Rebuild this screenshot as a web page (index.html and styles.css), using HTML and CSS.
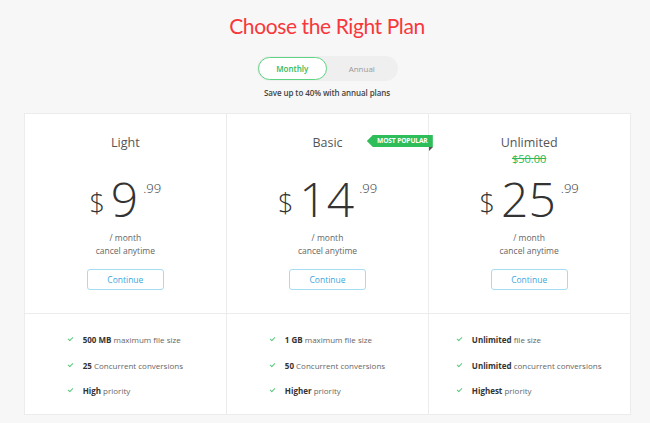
FILE: index.html
```html
<!DOCTYPE html>
<html>
<head>
<meta charset="utf-8">
<link rel="stylesheet" href="styles.css">
</head>
<body>
<div class="page">
  <h1 class="title">Choose the Right Plan</h1>
  <div class="toggle">
    <span class="opt active">Monthly</span>
    <span class="opt">Annual</span>
  </div>
  <p class="save">Save up to 40% with annual plans</p>
  <div class="plans">
    <div class="plan">
      <div class="top">
        <div class="name">Light</div>
        <div class="price"><span class="cur">$</span><span class="num">9</span><span class="cents">.99</span></div>
        <div class="per">/ month<br>cancel anytime</div>
        <a class="btn">Continue</a>
      </div>
      <div class="feats">
        <ul>
          <li><span class="chk"></span><b>500 MB</b> maximum file size</li>
          <li><span class="chk"></span><b>25</b> Concurrent conversions</li>
          <li><span class="chk"></span><b>High</b> priority</li>
        </ul>
      </div>
    </div>
    <div class="plan popular">
      <div class="top">
        <div class="badge">MOST POPULAR</div>
        <div class="name">Basic</div>
        <div class="price"><span class="cur">$</span><span class="num">14</span><span class="cents">.99</span></div>
        <div class="per">/ month<br>cancel anytime</div>
        <a class="btn">Continue</a>
      </div>
      <div class="feats">
        <ul>
          <li><span class="chk"></span><b>1 GB</b> maximum file size</li>
          <li><span class="chk"></span><b>50</b> Concurrent conversions</li>
          <li><span class="chk"></span><b>Higher</b> priority</li>
        </ul>
      </div>
    </div>
    <div class="plan">
      <div class="top">
        <div class="name">Unlimited</div>
        <div class="old">$50.00</div>
        <div class="price withold"><span class="cur">$</span><span class="num">25</span><span class="cents">.99</span></div>
        <div class="per">/ month<br>cancel anytime</div>
        <a class="btn">Continue</a>
      </div>
      <div class="feats">
        <ul>
          <li><span class="chk"></span><b>Unlimited</b> file size</li>
          <li><span class="chk"></span><b>Unlimited</b> concurrent conversions</li>
          <li><span class="chk"></span><b>Highest</b> priority</li>
        </ul>
      </div>
    </div>
  </div>
</div>
</body>
</html>
```
FILE: styles.css
```css
* { box-sizing: border-box; }
html, body { margin: 0; padding: 0; }
body {
  background: #f7f7f7;
  font-family: "Open Sans", "Liberation Sans", sans-serif;
  color: #555;
  height: 423px;
  overflow: hidden;
}
.page {
  display: flex;
  flex-direction: column;
  align-items: center;
  padding-top: 10px;
  padding-left: 4px;
}
.title {
  margin: 0;
  font-family: Lato, "Open Sans", sans-serif;
  font-size: 21px;
  line-height: 32px;
  font-weight: 400;
  letter-spacing: -0.4px;
  color: #f8373c;
}
.toggle {
  margin-top: 14px;
  width: 141px;
  height: 25px;
  background: #efefef;
  border-radius: 13px;
  display: flex;
  align-items: center;
  padding: 0 1px;
}
.opt {
  width: 70px;
  height: 23px;
  line-height: 21px;
  text-align: center;
  font-size: 8px;
  color: #999;
  border: 1px solid transparent;
  border-radius: 12px;
}
.opt.active {
  background: #fff;
  border-color: #5fd383;
  color: #2dba5a;
  font-weight: 600;
}
.save {
  margin: 6px 0 0;
  font-size: 8px;
  line-height: 12px;
  font-weight: 600;
  letter-spacing: -0.1px;
  color: #444;
}
.plans {
  margin-top: 14px;
  width: 607px;
  display: grid;
  grid-template-columns: 1fr 1fr 1fr;
  background: #fff;
  border: 1px solid #ececec;
}
.plan {
  display: flex;
  flex-direction: column;
  border-left: 1px solid #ececec;
}
.plan:first-child { border-left: none; }
.top {
  position: relative;
  height: 200px;
  display: flex;
  flex-direction: column;
  align-items: center;
  padding-top: 20px;
  border-bottom: 1px solid #ececec;
}
.name {
  font-size: 12.5px;
  line-height: 18px;
  color: #555;
}
.old {
  font-size: 11px;
  line-height: 13px;
  color: #2dba5a;
  text-decoration: line-through;
}
.price {
  margin-top: 21px;
  display: flex;
  align-items: flex-start;
  height: 52px;
  color: #333;
}
.price.withold { margin-top: 8px; }
.cur {
  font-size: 27px;
  font-weight: 300;
  line-height: 27px;
  margin-top: 16px;
  margin-right: 6px;
}
.num {
  font-size: 48px;
  font-weight: 300;
  line-height: 52px;
}
.cents {
  font-size: 13px;
  font-weight: 300;
  line-height: 13px;
  margin-top: 9px;
  margin-left: 5px;
}
.per {
  margin-top: 6px;
  text-align: center;
  font-size: 8.5px;
  line-height: 13px;
  color: #666;
}
.btn {
  margin-top: 12px;
  width: 77px;
  height: 21px;
  border: 1px solid #a6dcf2;
  border-radius: 3px;
  font-size: 8.5px;
  line-height: 19px;
  text-align: center;
  color: #3ba7de;
}
.feats {
  height: 100px;
  display: flex;
  justify-content: center;
  padding-top: 13px;
}
.feats ul {
  list-style: none;
  margin: 0;
  padding: 0;
}
.feats li {
  display: flex;
  align-items: center;
  height: 25.5px;
  font-size: 8px;
  color: #666;
  white-space: pre;
}
.feats b { font-weight: 700; color: #333; }
.chk {
  width: 5px;
  height: 3px;
  border-left: 1px solid #5cc97e;
  border-bottom: 1px solid #5cc97e;
  transform: rotate(-45deg);
  margin-right: 10px;
  margin-top: -2px;
}
.badge {
  position: absolute;
  top: 21px;
  right: -5px;
  width: 66px;
  height: 12px;
  padding-left: 5px;
  text-align: center;
  background: #2ebd59;
  color: #fff;
  font-size: 6.6px;
  font-weight: 700;
  letter-spacing: -0.1px;
  line-height: 12px;
  white-space: nowrap;
  clip-path: polygon(6px 0, 100% 0, 100% 100%, 6px 100%, 0 50%);
  z-index: 2;
}
.popular .top::after {
  content: "";
  position: absolute;
  top: 33px;
  right: -5px;
  border-top: 4px solid #555;
  border-right: 4px solid transparent;
  z-index: 2;
}
```
